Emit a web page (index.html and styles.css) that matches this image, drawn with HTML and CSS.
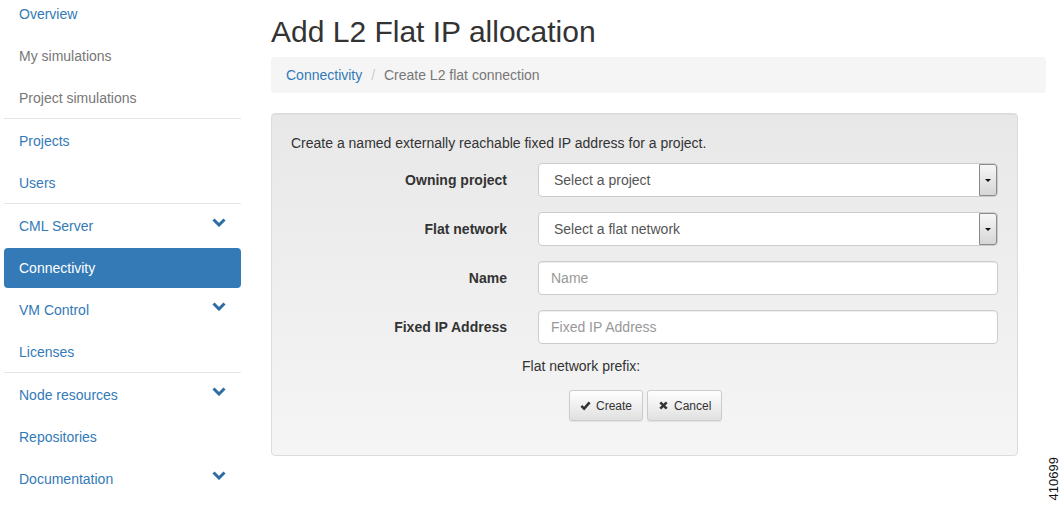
FILE: index.html
```html
<!DOCTYPE html>
<html lang="en">
<head>
    <meta charset="UTF-8">
    <meta name="viewport" content="width=device-width, initial-scale=1.0">
    <title>Add L2 Flat IP allocation</title>
    <link rel="stylesheet" href="styles.css">
</head>
<body>
    <div class="page">
        <ul class="sidebar">
            <li><a class="link" href="#">Overview</a></li>
            <li><a class="muted" href="#">My simulations</a></li>
            <li><a class="muted" href="#">Project simulations</a></li>
            <li class="divider"></li>
            <li><a class="link" href="#">Projects</a></li>
            <li><a class="link" href="#">Users</a></li>
            <li class="divider"></li>
            <li><a class="link" href="#">CML Server <svg class="chev" viewBox="0 0 14 9"><polyline points="1.5,1.5 7,7 12.5,1.5"/></svg></a></li>
            <li><a class="active" href="#">Connectivity</a></li>
            <li><a class="link" href="#">VM Control <svg class="chev" viewBox="0 0 14 9"><polyline points="1.5,1.5 7,7 12.5,1.5"/></svg></a></li>
            <li><a class="link" href="#">Licenses</a></li>
            <li class="divider"></li>
            <li><a class="link" href="#">Node resources <svg class="chev" viewBox="0 0 14 9"><polyline points="1.5,1.5 7,7 12.5,1.5"/></svg></a></li>
            <li><a class="link" href="#">Repositories</a></li>
            <li><a class="link" href="#">Documentation <svg class="chev" viewBox="0 0 14 9"><polyline points="1.5,1.5 7,7 12.5,1.5"/></svg></a></li>
        </ul>

        <div class="content">
            <h1>Add L2 Flat IP allocation</h1>
            <div class="breadcrumb">
                <a href="#">Connectivity</a>
                <span class="sep">/</span>
                <span class="current">Create L2 flat connection</span>
            </div>

            <div class="well">
                <p class="intro">Create a named externally reachable fixed IP address for a project.</p>
                <div class="form">
                    <label>Owning project</label>
                    <div class="select">
                        <span>Select a project</span>
                        <span class="arrow"></span>
                    </div>

                    <label>Flat network</label>
                    <div class="select">
                        <span>Select a flat network</span>
                        <span class="arrow"></span>
                    </div>

                    <label>Name</label>
                    <input type="text" placeholder="Name">

                    <label>Fixed IP Address</label>
                    <input type="text" placeholder="Fixed IP Address">
                </div>
                <p class="prefix">Flat network prefix:</p>
                <div class="buttons">
                    <button class="btn">
                        <svg viewBox="0 0 12 12"><polyline points="1.5,6.5 4.5,9.5 10.5,2.5"/></svg>Create
                    </button>
                    <button class="btn">
                        <svg viewBox="0 0 12 12"><line x1="2.5" y1="2.5" x2="9.5" y2="9.5"/><line x1="9.5" y1="2.5" x2="2.5" y2="9.5"/></svg>Cancel
                    </button>
                </div>
            </div>
        </div>

        <div class="figno">410699</div>
    </div>
</body>
</html>
```

FILE: styles.css
```css
*{
    box-sizing: border-box;
}
body{
    margin: 0;
    font-family: "Liberation Sans", Arial, sans-serif;
    font-size: 14px;
    line-height: 20px;
    color: #333;
    background: #fff;
    overflow: hidden;
}
.page{
    display: flex;
    height: 507px;
}

/* left nav */
.sidebar{
    list-style: none;
    margin: -8px 0 0 0;
    padding: 0 0 0 4px;
    width: 241px;
    flex-shrink: 0;
}
.sidebar li{
    margin-top: 2px;
}
.sidebar li.divider{
    height: 1px;
    background: #e5e5e5;
    margin-top: 0;
}
.sidebar a{
    display: flex;
    justify-content: space-between;
    align-items: center;
    height: 40px;
    padding: 10px 15px;
    text-decoration: none;
    border-radius: 4px;
}
.sidebar a.link{
    color: #337ab7;
}
.sidebar a.muted{
    color: #777;
}
.sidebar a.active{
    color: #fff;
    background: #337ab7;
}
.chev{
    width: 14px;
    height: 9px;
    margin-top: -7px;
}
.chev polyline{
    fill: none;
    stroke: #2e6da4;
    stroke-width: 3;
}

/* main area */
.content{
    margin-left: 30px;
    width: 775px;
    flex-shrink: 0;
}
h1{
    font-size: 30px;
    font-weight: normal;
    line-height: 33px;
    margin: 15px 0 9px 0;
    color: #333;
}
.breadcrumb{
    background: #f5f5f5;
    border-radius: 4px;
    padding: 8px 15px;
    height: 36px;
    margin-bottom: 20px;
}
.breadcrumb a{
    color: #337ab7;
    text-decoration: none;
}
.breadcrumb .sep{
    color: #ccc;
    padding: 0 5px;
}
.breadcrumb .current{
    color: #777;
}

.well{
    width: 747px;
    height: 343px;
    border: 1px solid #dcdcdc;
    border-radius: 4px;
    background: linear-gradient(#e8e8e8, #f5f5f5);
    padding: 19px 19px;
    box-shadow: inset 0 1px 1px rgba(0,0,0,.05);
}
.intro{
    margin: 0 0 10px 0;
}
.form{
    display: grid;
    grid-template-columns: 216px 1fr;
    column-gap: 31px;
    row-gap: 15px;
}
.form label{
    font-weight: bold;
    text-align: right;
    line-height: 34px;
}
.form input{
    height: 34px;
    border: 1px solid #ccc;
    border-radius: 4px;
    padding: 6px 12px;
    font-family: "Liberation Sans", Arial, sans-serif;
    font-size: 14px;
    color: #555;
    background: #fff;
    box-shadow: inset 0 1px 1px rgba(0,0,0,.075);
}
.form input::placeholder{
    color: #999;
}
.select{
    display: flex;
    justify-content: space-between;
    height: 34px;
    border: 1px solid #ccc;
    border-radius: 4px;
    background: #fff;
    padding: 0 0 0 15px;
    color: #555;
    line-height: 32px;
}
.select .arrow{
    width: 18px;
    height: 32px;
    border: 1px solid #8a8a8a;
    border-radius: 0 3px 3px 0;
    background: linear-gradient(#f6f6f6, #d6d6d6);
    position: relative;
}
.select .arrow::after{
    content: "";
    position: absolute;
    left: 5px;
    top: 14px;
    border-left: 3px solid transparent;
    border-right: 3px solid transparent;
    border-top: 3px solid #111;
}
.prefix{
    margin: 12px 0 0 231px;
    line-height: 20px;
}
.buttons{
    margin: 14px 0 0 278px;
    display: flex;
    gap: 4px;
}
.btn{
    display: flex;
    align-items: center;
    height: 31px;
    padding: 5px 10px;
    font-family: "Liberation Sans", Arial, sans-serif;
    font-size: 12px;
    color: #333;
    border: 1px solid #ccc;
    border-radius: 3px;
    background: linear-gradient(#fff, #e0e0e0);
    box-shadow: 0 1px 1px rgba(0,0,0,.08);
}
.btn svg{
    width: 11px;
    height: 11px;
    margin-right: 5px;
}
.btn polyline, .btn line{
    fill: none;
    stroke: #333;
    stroke-width: 2.8;
}

.figno{
    margin-left: auto;
    align-self: flex-end;
    writing-mode: vertical-rl;
    transform: rotate(180deg);
    font-size: 13px;
    line-height: 15px;
    color: #111;
    margin-right: 6px;
    margin-bottom: 7px;
}
```
